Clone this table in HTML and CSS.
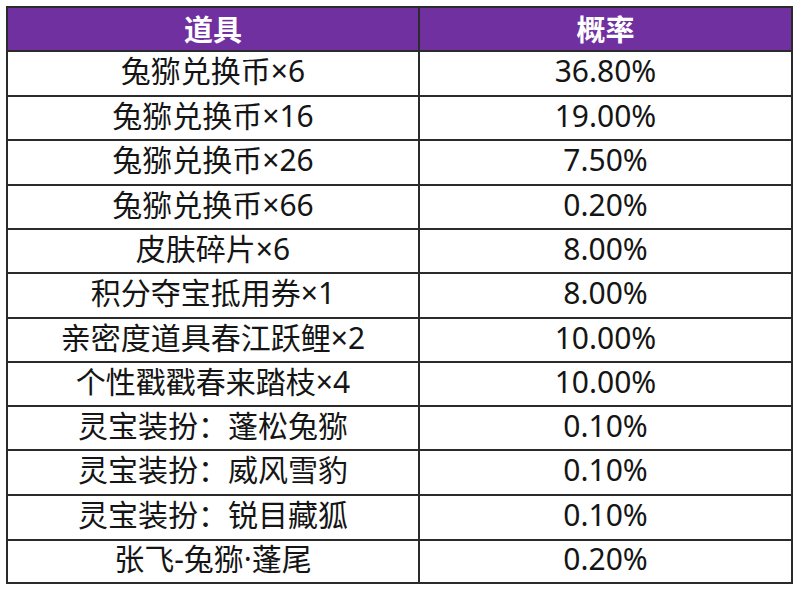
FILE: index.html
```html
<!DOCTYPE html>
<html lang="zh-CN">
<head>
<meta charset="utf-8">
<title>概率</title>
<link rel="stylesheet" href="styles.css">
</head>
<body>
<div class="sheet">
  <div class="cell head">道具</div><div class="cell head">概率</div>
  <div class="cell">兔猕兑换币×6</div><div class="cell">36.80%</div>
  <div class="cell">兔猕兑换币×16</div><div class="cell">19.00%</div>
  <div class="cell">兔猕兑换币×26</div><div class="cell">7.50%</div>
  <div class="cell">兔猕兑换币×66</div><div class="cell">0.20%</div>
  <div class="cell">皮肤碎片×6</div><div class="cell">8.00%</div>
  <div class="cell">积分夺宝抵用券×1</div><div class="cell">8.00%</div>
  <div class="cell">亲密度道具春江跃鲤×2</div><div class="cell">10.00%</div>
  <div class="cell">个性戳戳春来踏枝×4</div><div class="cell">10.00%</div>
  <div class="cell">灵宝装扮：蓬松兔猕</div><div class="cell">0.10%</div>
  <div class="cell">灵宝装扮：威风雪豹</div><div class="cell">0.10%</div>
  <div class="cell">灵宝装扮：锐目藏狐</div><div class="cell">0.10%</div>
  <div class="cell">张飞-兔猕·蓬尾</div><div class="cell">0.20%</div>
</div>
</body>
</html>
```
FILE: styles.css
```css
html, body {
  margin: 0;
  padding: 0;
  background: #ffffff;
}
body {
  font-family: "Noto Sans", "Noto Sans CJK SC", sans-serif;
  color: #151515;
}
.sheet {
  margin: 6px 0 0 6px;
  width: 785px;
  display: grid;
  grid-template-columns: 412px 373px;
  grid-template-rows: 44px 45px 44px 45px 44px 44px 45px 44px 44px 44px 45px 45px 43px;
  border-top: 2px solid #2b2b2b;
  border-left: 2px solid #2b2b2b;
}
.cell {
  display: flex;
  align-items: center;
  justify-content: center;
  border-right: 2px solid #2b2b2b;
  border-bottom: 2px solid #2b2b2b;
  font-size: 30px;
  line-height: 1;
  white-space: nowrap;
  padding-bottom: 5px;
}
.head {
  background: #7030a0;
  color: #ffffff;
  font-weight: 700;
  font-family: "Noto Sans CJK SC", sans-serif;
  font-size: 29px;
  padding-bottom: 2px;
}
```
